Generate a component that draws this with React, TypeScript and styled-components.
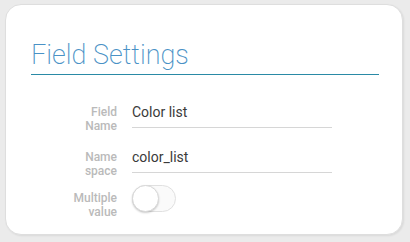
import styled, { createGlobalStyle } from "styled-components";

const GlobalStyle = createGlobalStyle`
  html, body {
    margin: 0;
    padding: 0;
    background: #ebebeb;
    font-family: Roboto, "Liberation Sans", sans-serif;
  }
`;

const App = () => {
  return (
    <>
      <GlobalStyle />
      <Page>
        <Card>
          <Title>Field Settings</Title>
          <Form>
            <Row $top={0}>
              <Label>
                Field
                <br />
                Name
              </Label>
              <Input>Color list</Input>
            </Row>
            <Row $top={17}>
              <Label>
                Name
                <br />
                space
              </Label>
              <Input>color_list</Input>
            </Row>
            <Row $top={13}>
              <Label>
                Multiple
                <br />
                value
              </Label>
              <Toggle>
                <Knob />
              </Toggle>
            </Row>
          </Form>
        </Card>
      </Page>
    </>
  );
};

const Page = styled.div`
  width: 410px;
  height: 242px;
  padding: 4px 7px 7px 5px;
  box-sizing: border-box;
`;

const Card = styled.div`
  height: 100%;
  box-sizing: border-box;
  background: #ffffff;
  border-radius: 16px;
  border: 1px solid #dedede;
  box-shadow: 1px 1px 2px rgba(0, 0, 0, 0.08);
  padding: 34px 23px 0 25px;
`;

const Title = styled.h1`
  margin: 0;
  font-size: 27px;
  font-weight: 200;
  line-height: 32px;
  color: #4a92c6;
  padding-bottom: 3px;
  border-bottom: 1.5px solid #2a8aa6;
`;

const Form = styled.div`
  display: flex;
  flex-direction: column;
  padding-top: 30px;
`;

const Row = styled.div<{ $top: number }>`
  display: flex;
  align-items: flex-start;
  gap: 15px;
  margin-top: ${(p) => p.$top}px;
`;

const Label = styled.div`
  width: 86px;
  text-align: right;
  font-size: 12px;
  font-weight: 500;
  line-height: 14px;
  color: #bababa;
`;

const Input = styled.div`
  width: 200px;
  height: 24px;
  margin-top: -1px;
  box-sizing: border-box;
  border-bottom: 1px solid #d6d6d6;
  font-size: 14px;
  line-height: 17px;
  color: #3a3a3a;
`;

const Toggle = styled.div`
  width: 44px;
  height: 27px;
  margin-top: -6px;
  box-sizing: border-box;
  border: 1px solid #e0e0e0;
  border-radius: 14px;
  background: #fafafa;
  position: relative;
`;

const Knob = styled.div`
  position: absolute;
  left: -1px;
  top: -1px;
  width: 27px;
  height: 27px;
  box-sizing: border-box;
  border-radius: 50%;
  background: #ffffff;
  border: 1px solid #d8d8d8;
  box-shadow: 0 1px 2px rgba(0, 0, 0, 0.2);
`;

export default App;
